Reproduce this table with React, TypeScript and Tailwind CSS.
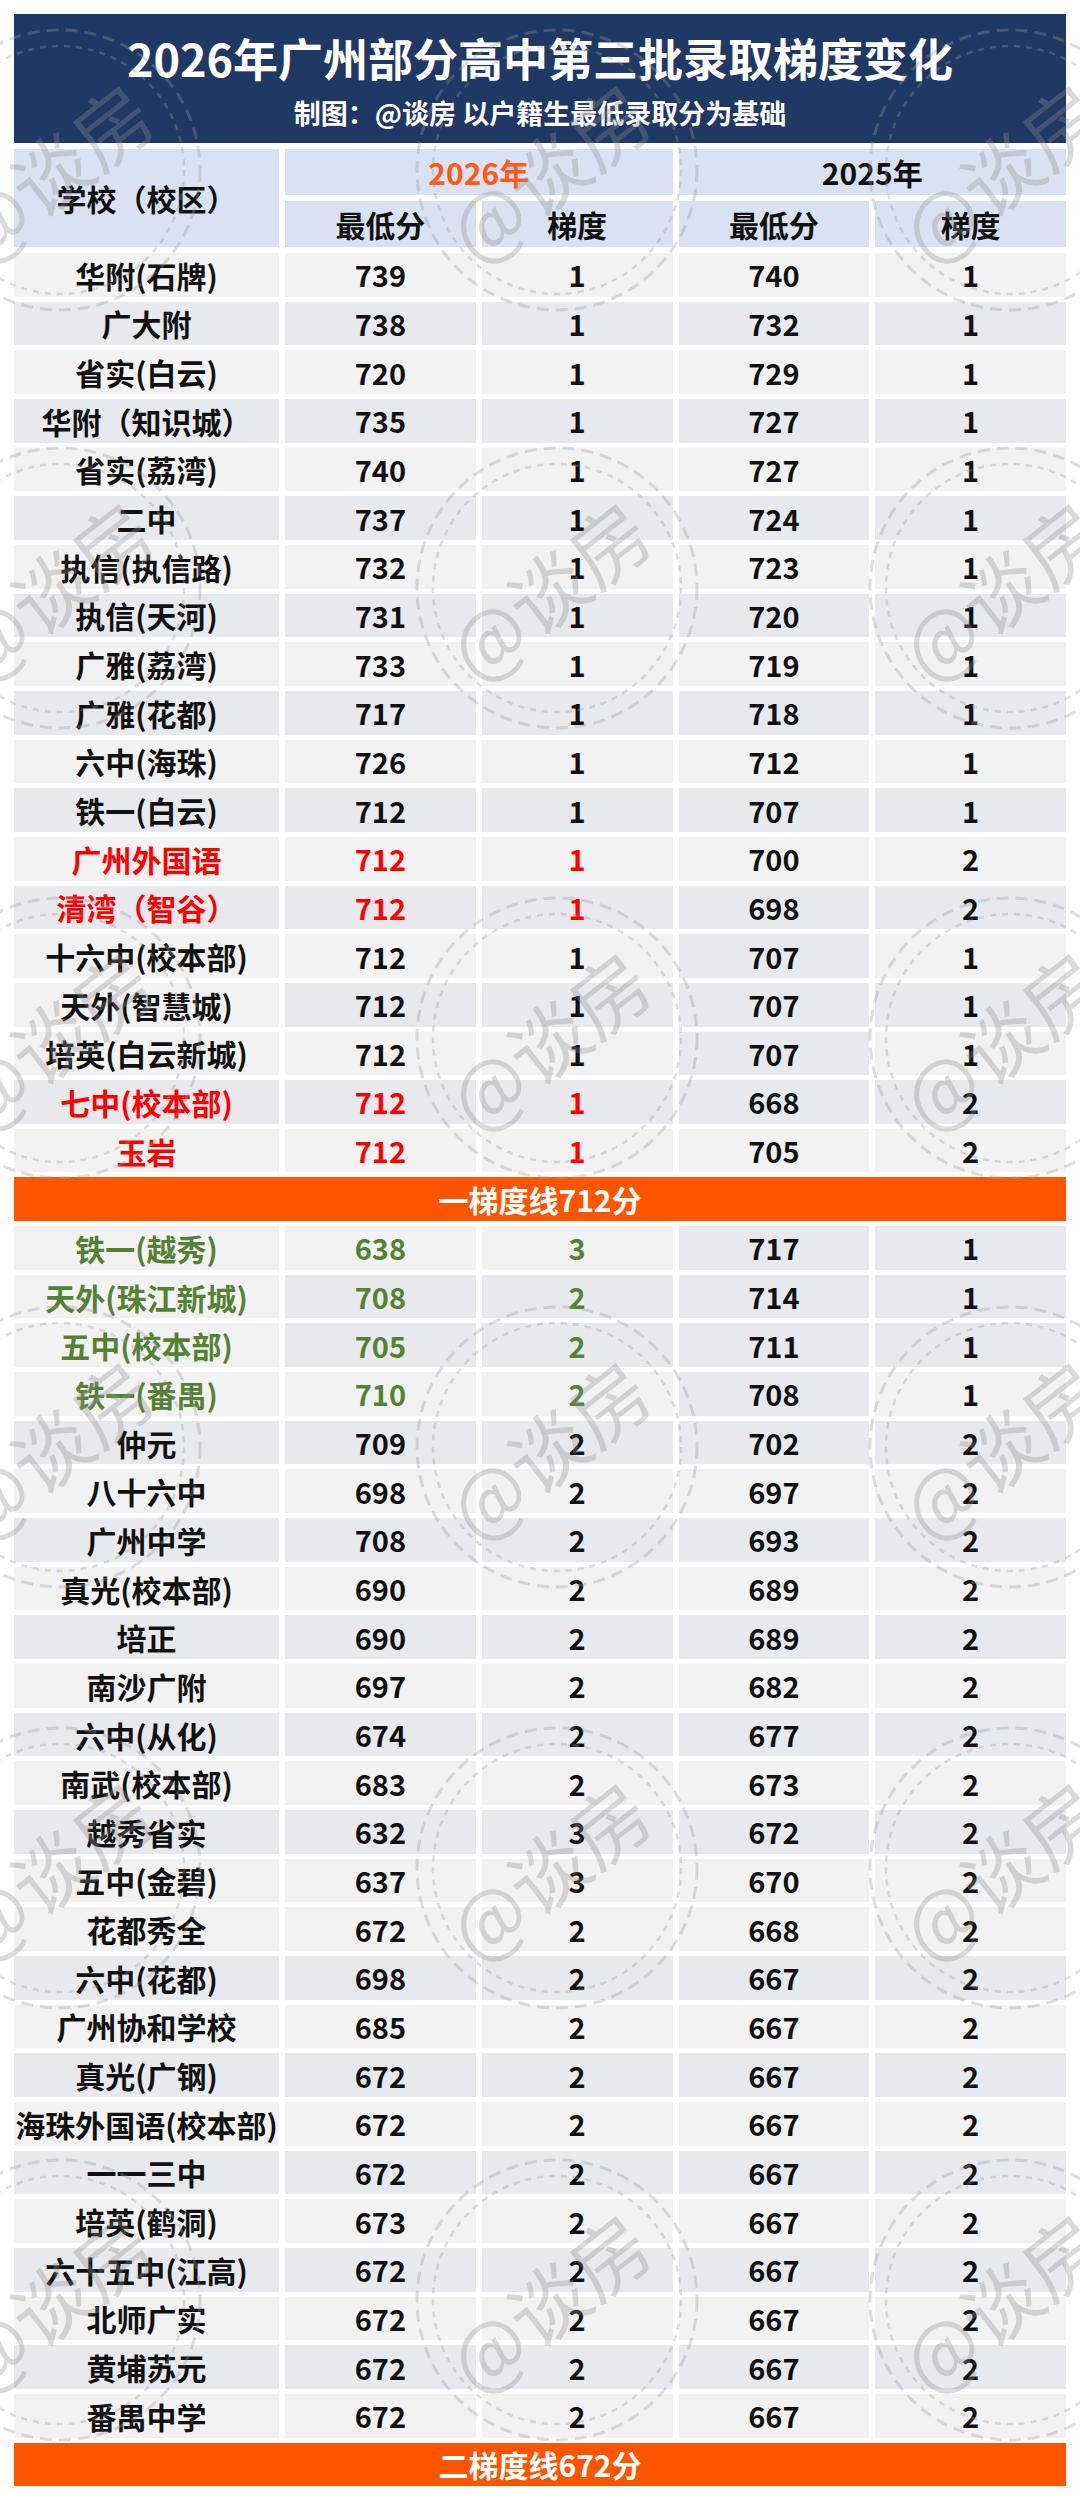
type Tone = 'red' | 'green' | undefined

// name, 2026 score, 2026 tier, 2025 score, 2025 tier, cell shades, tone
type Row = [string, number, number, number, number, string, Tone?]

const tierOne: Row[] = [
  ['华附(石牌)', 739, 1, 740, 1, 'LLLLL'],
  ['广大附', 738, 1, 732, 1, 'DDDDD'],
  ['省实(白云)', 720, 1, 729, 1, 'LLLLL'],
  ['华附（知识城）', 735, 1, 727, 1, 'DDDDD'],
  ['省实(荔湾)', 740, 1, 727, 1, 'LLLLL'],
  ['二中', 737, 1, 724, 1, 'DDDDD'],
  ['执信(执信路)', 732, 1, 723, 1, 'LLLLL'],
  ['执信(天河)', 731, 1, 720, 1, 'DDDDD'],
  ['广雅(荔湾)', 733, 1, 719, 1, 'LLLLL'],
  ['广雅(花都)', 717, 1, 718, 1, 'DDDDD'],
  ['六中(海珠)', 726, 1, 712, 1, 'LLLLL'],
  ['铁一(白云)', 712, 1, 707, 1, 'DDDDD'],
  ['广州外国语', 712, 1, 700, 2, 'LLLLL', 'red'],
  ['清湾（智谷）', 712, 1, 698, 2, 'DDDDD', 'red'],
  ['十六中(校本部)', 712, 1, 707, 1, 'LLLDL'],
  ['天外(智慧城)', 712, 1, 707, 1, 'LDDDD'],
  ['培英(白云新城)', 712, 1, 707, 1, 'LLLDL'],
  ['七中(校本部)', 712, 1, 668, 2, 'DDDDD', 'red'],
  ['玉岩', 712, 1, 705, 2, 'LLLLL', 'red'],
]

const tierTwo: Row[] = [
  ['铁一(越秀)', 638, 3, 717, 1, 'LLLDD', 'green'],
  ['天外(珠江新城)', 708, 2, 714, 1, 'LDDDD', 'green'],
  ['五中(校本部)', 705, 2, 711, 1, 'LDDDD', 'green'],
  ['铁一(番禺)', 710, 2, 708, 1, 'LLLDL', 'green'],
  ['仲元', 709, 2, 702, 2, 'DDDDD'],
  ['八十六中', 698, 2, 697, 2, 'LLLLL'],
  ['广州中学', 708, 2, 693, 2, 'DDDDD'],
  ['真光(校本部)', 690, 2, 689, 2, 'LLLLL'],
  ['培正', 690, 2, 689, 2, 'DDDDD'],
  ['南沙广附', 697, 2, 682, 2, 'LLLLL'],
  ['六中(从化)', 674, 2, 677, 2, 'DDDDD'],
  ['南武(校本部)', 683, 2, 673, 2, 'LLLLL'],
  ['越秀省实', 632, 3, 672, 2, 'DDDDD'],
  ['五中(金碧)', 637, 3, 670, 2, 'LLLLL'],
  ['花都秀全', 672, 2, 668, 2, 'LLLLL'],
  ['六中(花都)', 698, 2, 667, 2, 'DDDDD'],
  ['广州协和学校', 685, 2, 667, 2, 'LLLLL'],
  ['真光(广钢)', 672, 2, 667, 2, 'DDDDD'],
  ['海珠外国语(校本部)', 672, 2, 667, 2, 'LLLLL'],
  ['一一三中', 672, 2, 667, 2, 'DDDDD'],
  ['培英(鹤洞)', 673, 2, 667, 2, 'LLLLL'],
  ['六十五中(江高)', 672, 2, 667, 2, 'DDDDD'],
  ['北师广实', 672, 2, 667, 2, 'LLLLL'],
  ['黄埔苏元', 672, 2, 667, 2, 'DDDDD'],
  ['番禺中学', 672, 2, 667, 2, 'LLLLL'],
]

const shade: Record<string, string> = {
  L: 'bg-[#f2f2f2]',
  D: 'bg-[#e8e9ed]',
}

const toneText: Record<string, string> = {
  red: 'text-[#ff0000]',
  green: 'text-[#548235]',
  none: 'text-[#111111]',
}

const grid = 'grid grid-cols-[265px_1fr_1fr_1fr_1fr] gap-x-[6px]'

function DataRow({ row }: { row: Row }) {
  const [name, s26, g26, s25, g25, shades, tone] = row
  const lead = toneText[tone ?? 'none']
  const cells = [name, s26, g26, s25, g25]

  return (
    <div className={`${grid} h-[43.67px]`}>
      {cells.map((value, i) => (
        <div
          key={i}
          className={`flex items-center justify-center leading-none ${shade[shades[i]]} ${
            i < 3 ? lead : toneText.none
          } ${i === 0 ? 'text-[30px] whitespace-nowrap' : 'text-[29px]'}`}
        >
          {value}
        </div>
      ))}
    </div>
  )
}

function Band({ label }: { label: string }) {
  return (
    <div className="flex h-[43.67px] items-center justify-center bg-[#ff5400] text-[30px] leading-none text-white">
      {label}
    </div>
  )
}

// 水印：@谈房 圆章
const stampRows = [170, 588, 1038, 1447, 1868, 2300]
const stampCols = [60, 557, 1010]

function Watermark() {
  return (
    <svg
      className="pointer-events-none absolute inset-0 h-full w-full"
      viewBox="0 0 1080 2501"
      preserveAspectRatio="none"
    >
      {stampRows.map((cy) =>
        stampCols.map((cx) => (
          <g key={`${cx}-${cy}`} opacity={0.32}>
            <circle cx={cx} cy={cy} r={140} fill="none" stroke="#9a9a9a" strokeWidth={3} strokeDasharray="12 7" />
            <circle cx={cx} cy={cy} r={124} fill="none" stroke="#9a9a9a" strokeWidth={2.5} strokeDasharray="6 6" />
            <text
              x={cx - 10}
              y={cy}
              fill="#8f8f8f"
              fontSize={78}
              fontWeight={400}
              textAnchor="middle"
              dominantBaseline="central"
              transform={`rotate(-38 ${cx - 10} ${cy})`}
              style={{ fontFamily: '"Noto Sans CJK SC", sans-serif' }}
            >
              @谈房
            </text>
          </g>
        )),
      )}
    </svg>
  )
}

export default function App() {
  return (
    <div className="relative h-[2501px] w-[1080px] overflow-hidden bg-white px-[14px] pt-[14px] font-['Noto_Sans_CJK_SC','Noto_Sans',sans-serif] font-bold">
      <div className="flex flex-col">
        {/* 标题 */}
        <div className="flex h-[129px] flex-col items-center bg-[#203864] text-white">
          <h1 className="mt-[20px] text-[45px] leading-[48px] font-bold">2026年广州部分高中第三批录取梯度变化</h1>
          <p className="mt-[16px] text-[27px] leading-[30px] font-bold">制图：@谈房 以户籍生最低录取分为基础</p>
        </div>

        {/* 表头 */}
        <div className="mt-[6px] grid h-[98px] grid-cols-[265px_1fr_1fr_1fr_1fr] grid-rows-2 gap-[6px] text-[30px] leading-none text-[#111111]">
          <div className="row-span-2 flex items-center justify-center bg-[#d9e1f2]">学校（校区）</div>
          <div className="col-span-2 flex items-center justify-center bg-[#d9e1f2] text-[#ff5a14]">2026年</div>
          <div className="col-span-2 flex items-center justify-center bg-[#d9e1f2]">2025年</div>
          <div className="flex items-center justify-center bg-[#d9e1f2]">最低分</div>
          <div className="flex items-center justify-center bg-[#d9e1f2]">梯度</div>
          <div className="flex items-center justify-center bg-[#d9e1f2]">最低分</div>
          <div className="flex items-center justify-center bg-[#d9e1f2]">梯度</div>
        </div>

        {/* 数据 */}
        <div className="mt-[6px] flex flex-col gap-[5px]">
          {tierOne.map((row) => (
            <DataRow key={row[0]} row={row} />
          ))}
          <Band label="一梯度线712分" />
          {tierTwo.map((row) => (
            <DataRow key={row[0]} row={row} />
          ))}
          <Band label="二梯度线672分" />
        </div>
      </div>
      <Watermark />
    </div>
  )
}
